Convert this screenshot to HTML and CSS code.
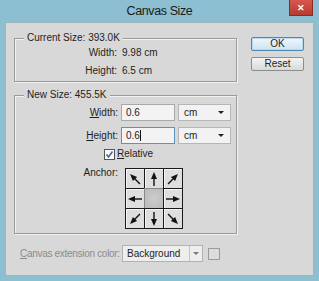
FILE: index.html
```html
<!DOCTYPE html>
<html lang="en">
<head>
    <meta charset="UTF-8">
    <title>Canvas Size</title>
    <link rel="stylesheet" href="styles.css">
</head>
<body>
    <svg width="0" height="0" class="defs">
        <defs>
            <g id="arrow">
                <line x1="9" y1="16" x2="9" y2="7" stroke="#111" stroke-width="1.4"/>
                <polygon points="9,2 6,9 12,9" fill="#111"/>
            </g>
        </defs>
    </svg>

    <div class="window">
        <div class="titlebar">
            <div></div>
            <div class="title">Canvas Size</div>
            <div class="close-wrap"><button class="close-btn">&#x2715;</button></div>
        </div>

        <div class="dialog">
            <div class="main">
                <div class="group group-current">
                    <div class="group-title">Current Size: 393.0K</div>
                    <div class="info-grid">
                        <span class="label">Width:</span><span>9.98 cm</span>
                        <span class="label">Height:</span><span>6.5 cm</span>
                    </div>
                </div>

                <div class="group group-new">
                    <div class="group-title">New Size: 455.5K</div>
                    <div class="field-grid">
                        <span class="label"><u>W</u>idth:</span>
                        <div class="input">0.6</div>
                        <div class="select">cm<span class="caret"></span></div>

                        <span class="label"><u>H</u>eight:</span>
                        <div class="input focused">0.6<span class="cursor"></span></div>
                        <div class="select">cm<span class="caret"></span></div>
                    </div>

                    <div class="check-row">
                        <span class="checkbox">
                            <svg width="9" height="9" viewBox="0 0 9 9"><polyline points="1.5,4.5 3.5,7 7.5,1.5" fill="none" stroke="#3d6aa8" stroke-width="1.6"/></svg>
                        </span>
                        <span><u>R</u>elative</span>
                    </div>

                    <div class="anchor-row">
                        <span class="label">Anchor:</span>
                        <div class="anchor-grid">
                            <div class="cell"><svg width="18" height="18"><use href="#arrow" transform="rotate(-45 9 9)"/></svg></div>
                            <div class="cell"><svg width="18" height="18"><use href="#arrow"/></svg></div>
                            <div class="cell"><svg width="18" height="18"><use href="#arrow" transform="rotate(45 9 9)"/></svg></div>
                            <div class="cell"><svg width="18" height="18"><use href="#arrow" transform="rotate(-90 9 9)"/></svg></div>
                            <div class="cell center"></div>
                            <div class="cell"><svg width="18" height="18"><use href="#arrow" transform="rotate(90 9 9)"/></svg></div>
                            <div class="cell"><svg width="18" height="18"><use href="#arrow" transform="rotate(-135 9 9)"/></svg></div>
                            <div class="cell"><svg width="18" height="18"><use href="#arrow" transform="rotate(180 9 9)"/></svg></div>
                            <div class="cell"><svg width="18" height="18"><use href="#arrow" transform="rotate(135 9 9)"/></svg></div>
                        </div>
                    </div>
                </div>

                <div class="ext-row">
                    <span class="ext-label"><u>C</u>anvas extension color:</span>
                    <div class="ext-select">
                        <span class="ext-value">Background</span>
                        <span class="ext-drop"><span class="caret light"></span></span>
                    </div>
                    <span class="swatch"></span>
                </div>
            </div>

            <div class="buttons">
                <button class="btn btn-default">OK</button>
                <button class="btn">Reset</button>
            </div>
        </div>
    </div>
</body>
</html>
```

FILE: styles.css
```css
/* Global */
body {
    margin: 0;
    font-family: "Liberation Sans", Arial, sans-serif;
    font-size: 10px;
    color: #1e1e1e;
    background: #8cbfd1;
}

u {
    text-decoration: underline;
    text-underline-offset: 1px;
}

.defs {
    position: absolute;
}

button {
    font-family: inherit;
    border: none;
    outline: none;
    padding: 0;
}

/* Window frame */
.window {
    width: 319px;
    height: 281px;
    box-sizing: border-box;
    padding: 0 5px 5px 5px;
    background: #8cbfd1;
    display: flex;
    flex-direction: column;
}

.titlebar {
    height: 22px;
    display: grid;
    grid-template-columns: 1fr auto 1fr;
    align-items: start;
}

.title {
    font-size: 12.5px;
    line-height: 23px;
    letter-spacing: -0.4px;
    color: #1a1a1a;
}

.close-wrap {
    display: flex;
    justify-content: flex-end;
    padding-right: 1px;
}

.close-btn {
    width: 24px;
    height: 16px;
    background: linear-gradient(#d8574d, #b53a30);
    color: #fff;
    font-size: 9px;
    font-weight: bold;
    line-height: 16px;
    border: 1px solid #8e2a22;
    border-top: none;
    box-sizing: border-box;
}

/* Dialog body */
.dialog {
    flex: 1;
    display: flex;
    gap: 14px;
    padding: 15px 9px 0 8px;
    background: #d8d8d8;
    border: 1px solid #9fb4bb;
}

.main {
    width: 223px;
    display: flex;
    flex-direction: column;
}

.group {
    border: 1px solid #9a9a9a;
    box-shadow: inset 1px 1px 0 #f2f2f2, 1px 1px 0 #f2f2f2;
    padding: 0 0 2px 0;
}

.group-title {
    width: fit-content;
    margin: -8px 0 0 9px;
    padding: 0 3px;
    line-height: 14px;
    background: #d8d8d8;
}

.info-grid {
    display: grid;
    grid-template-columns: 102px auto;
    column-gap: 5px;
    row-gap: 2px;
    line-height: 16px;
}

.label {
    text-align: right;
}

.group-new {
    margin-top: 13px;
    padding-bottom: 4px;
}

.field-grid {
    display: grid;
    grid-template-columns: 103px 54px 53px;
    column-gap: 3px;
    row-gap: 6px;
    align-items: center;
    margin-top: 2px;
}

.input {
    height: 17px;
    box-sizing: border-box;
    border: 1px solid #a9a9a9;
    background: #f3f3f3;
    padding-left: 4px;
    line-height: 15px;
    display: flex;
    align-items: center;
}

.input.focused {
    border-color: #5b95bf;
}

.cursor {
    width: 1px;
    height: 11px;
    background: #111;
}

.select {
    height: 17px;
    box-sizing: border-box;
    border: 1px solid #b6b6b6;
    background: #f2f2f2;
    padding: 0 6px 0 5px;
    display: flex;
    align-items: center;
    justify-content: space-between;
}

.caret {
    width: 0;
    height: 0;
    border-left: 3px solid transparent;
    border-right: 3px solid transparent;
    border-top: 3px solid #222;
}

.caret.light {
    border-top-color: #777;
}

.check-row {
    display: flex;
    align-items: center;
    gap: 2px;
    margin: 4px 0 0 89px;
    line-height: 12px;
}

.checkbox {
    width: 9px;
    height: 9px;
    border: 1px solid #555;
    background: #fafafa;
    display: flex;
}

.anchor-row {
    display: grid;
    grid-template-columns: 103px auto;
    column-gap: 7px;
    margin-top: 8px;
}

.anchor-row .label {
    line-height: 10px;
}

.anchor-grid {
    display: grid;
    grid-template-columns: repeat(3, 18px);
    grid-template-rows: repeat(3, 19px);
    gap: 1px;
    width: fit-content;
    background: #bdbdbd;
    border: 1px solid #1a1a1a;
}

.cell {
    box-sizing: border-box;
    border: 1px solid #1a1a1a;
    margin: -1px;
    width: 20px;
    height: 21px;
    background: #dedede;
    box-shadow: inset 1px 1px 0 #f5f5f5;
    display: flex;
    align-items: center;
    justify-content: center;
}

.cell.center {
    background: radial-gradient(#cdcdcd, #b9b9b9);
    box-shadow: none;
    border-color: #8a8a8a;
}

/* Canvas extension row */
.ext-row {
    display: flex;
    align-items: center;
    margin-top: 11px;
    padding-left: 6px;
}

.ext-label {
    color: #8c8c8c;
    width: 102px;
    white-space: nowrap;
    letter-spacing: -0.3px;
}

.ext-select {
    width: 81px;
    height: 17px;
    box-sizing: border-box;
    border: 1px solid #b2b2b2;
    background: #eeeeee;
    display: flex;
}

.ext-value {
    flex: 1;
    padding-left: 4px;
    line-height: 15px;
}

.ext-drop {
    width: 12px;
    border-left: 1px solid #c4c4c4;
    display: flex;
    align-items: center;
    justify-content: center;
}

.swatch {
    width: 10px;
    height: 10px;
    margin-left: 5px;
    border: 1px solid #9a9a9a;
    background: #dcdcdc;
}

/* Buttons */
.buttons {
    display: flex;
    flex-direction: column;
    gap: 6px;
    margin-top: -1px;
}

.btn {
    width: 53px;
    height: 14px;
    box-sizing: border-box;
    border: 1px solid #8d8d8d;
    border-radius: 2px;
    background: linear-gradient(#f4f4f4, #d9d9d9);
    font-size: 10px;
    color: #1e1e1e;
    line-height: 12px;
}

.btn-default {
    border-color: #4f88b3;
    background: linear-gradient(#eef6fb, #cfe3ef);
    box-shadow: inset 0 0 0 1px #b9d9ee;
}
```
